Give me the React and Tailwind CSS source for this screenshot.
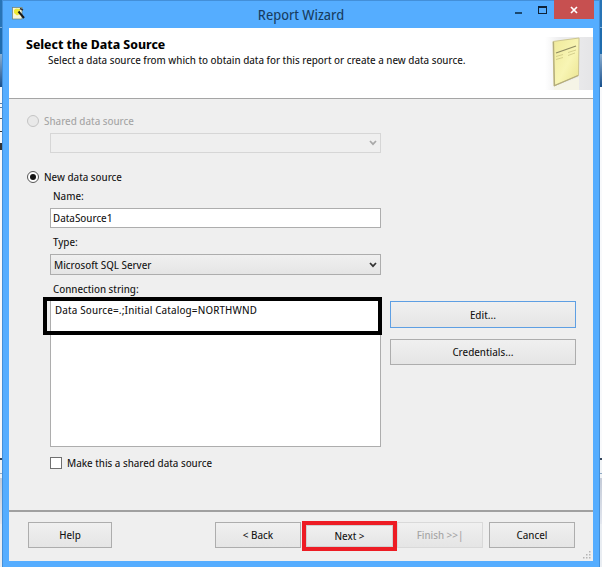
import React, { useState } from 'react';

const Chevron = ({ className }) => (
  <svg className={className} width="8" height="6" viewBox="0 0 8 6" fill="none" stroke="currentColor" strokeWidth="1.7">
    <path d="M1 1 L4 4.2 L7 1" />
  </svg>
);

const WizardIcon = () => (
  <svg width="13" height="13" viewBox="0 0 13 13">
    <rect x="0.5" y="0.5" width="9.5" height="11.5" fill="#f6f6dc" stroke="#77806a" strokeWidth="0.7" />
    <path d="M2 3 L4 1.5 L8 2 L8 7 L5 8.5 L2 6 Z" fill="#eeea35" />
    <path d="M6.5 4.5 L12 11" stroke="#1a1a1a" strokeWidth="2" />
    <path d="M8 1.5 L11 3" stroke="#333" strokeWidth="1.4" />
  </svg>
);

const ReportArt = () => (
  <svg width="48" height="53" viewBox="0 0 48 53">
    <defs>
      <linearGradient id="fade" x1="0" x2="1" y1="0" y2="0">
        <stop offset="0" stopColor="#ffffff" />
        <stop offset="0.3" stopColor="#eeeeef" />
        <stop offset="1" stopColor="#e5e5e7" />
      </linearGradient>
      <linearGradient id="paper" x1="0" x2="1" y1="0" y2="1">
        <stop offset="0" stopColor="#efe99a" />
        <stop offset="0.55" stopColor="#f8f5b4" />
        <stop offset="1" stopColor="#eae38e" />
      </linearGradient>
    </defs>
    <rect width="48" height="53" fill="url(#fade)" />
    <path d="M9 50 L34 40 L34 53 L9 53 Z" fill="#f5f4e6" />
    <path d="M8 4.5 L34 1 L33.5 38.5 L9 49 Z" fill="url(#paper)" stroke="#cdc691" strokeWidth="1" />
    <path d="M8.5 5 L9.5 48.5 L33 38.5" fill="none" stroke="#b3ac7c" strokeWidth="1.2" />
    <path d="M11 16 L31 9" stroke="#8f8b62" strokeWidth="1.3" />
    <path d="M11 19.5 L18 17.5 M23 15.5 L31 13 M11 22.5 L18 20.5 M23 18.5 L30 16" stroke="#cbc583" strokeWidth="0.8" />
  </svg>
);

const Button = ({ className, children, ...props }) => (
  <button
    className={`border bg-linear-to-b from-[#f0f0f0] to-[#e5e5e5] text-center ${className}`}
    {...props}
  >
    {children}
  </button>
);

// slivers of the window behind the dialog
const EdgeStrip = ({ marks }) => (
  <div className="flex w-[2px] shrink-0 flex-col bg-[#e9edf2]">
    <div className="h-[27px] bg-[#2874b6]"></div>
    <div className="h-px bg-[#7fb0dc]"></div>
    <div className="h-[26px] bg-[#1f6cae]"></div>
    <div className="h-[33px] bg-linear-to-b from-[#8bb0d2] to-[#16508c]"></div>
    <div className="flex h-[371px] flex-col bg-[#f8f9fb]">
      {marks && (
        <>
          <div className="mt-[16px] h-px bg-[#5b7fa6]"></div>
          <div className="mt-[3px] h-px bg-[#5b7fa6]"></div>
          <div className="mt-[10px] h-px bg-[#555]"></div>
          <div className="mt-[12px] h-px bg-[#333]"></div>
          <div className="mt-[11px] h-[7px] bg-[#333]"></div>
        </>
      )}
    </div>
    <div className="h-[2px] bg-[#34465c]"></div>
    <div className="h-[13px] bg-[#f0f3f6]"></div>
    <div className="h-px bg-[#8fa9c4]"></div>
    <div className="h-[4px] bg-[#f0f3f6]"></div>
    <div className="h-[46px] bg-linear-to-b from-[#c4cbd8] to-[#e2e6ee]"></div>
  </div>
);

const App = () => {
  const [mode, setMode] = useState('new');
  const [name, setName] = useState('DataSource1');
  const [shared, setShared] = useState(false);

  return (
    <div className="flex h-[567px] w-[602px] overflow-hidden font-['Noto_Sans_Display','Noto_Sans','Open_Sans',sans-serif] text-[11.5px] leading-[16px] text-[#111] [font-stretch:87.5%]">
      <EdgeStrip marks />
      <div className="flex w-[598px] flex-col border-x border-t border-[#438fd9] bg-[#55adff] px-[6px] pb-[6px]">
        <div className="flex h-[27px] shrink-0">
          <div className="w-[130px] pt-[6px] pl-[3px]">
            <WizardIcon />
          </div>
          <h1 className="flex-1 pt-[4px] pl-[24px] text-center text-[15px] leading-[18px] text-[#173c60]">Report Wizard</h1>
          <div className="-mr-px flex w-[155px] justify-end">
            <div className="mt-[11px] mr-[16px] h-[2px] w-[7px] bg-[#1b486f]"></div>
            <div className="mt-[5px] mr-[7px] h-[8px] w-[9px] border border-t-2 border-[#0f2338]"></div>
            <button className="-mt-px flex h-[19px] w-[40px] items-center justify-center bg-[#c75050] pt-px">
              <svg width="8" height="8" viewBox="0 0 8 8" stroke="#fff" strokeWidth="1.7">
                <path d="M1 1 L7 7 M7 1 L1 7" />
              </svg>
            </button>
          </div>
        </div>

        <div className="flex flex-1 flex-col bg-[#efefef]">
          <header className="flex h-[71px] justify-between border-b border-[#a5a5a5] bg-white">
            <div className="pt-[7px] pl-[17px]">
              <h2 className="text-[13px] leading-[18px] font-bold text-black [font-stretch:100%]">Select the Data Source</h2>
              <p className="-mt-px pl-[22px]">Select a data source from which to obtain data for this report or create a new data source.</p>
            </div>
            <div className="pt-[9px]">
              <ReportArt />
            </div>
          </header>

          <main className="flex h-[411px] flex-col pt-[14px] pl-[18px]">
            <label className="flex h-[16px] items-center gap-[5px] text-[#a3a3a3]">
              <span className="h-[12px] w-[12px] rounded-full border border-[#c4c4c4] bg-[#e9e9e9]"></span>
              Shared data source
            </label>
            <div className="mt-[4px] ml-[23px] flex h-[20px] w-[331px] items-center justify-end border border-[#d6d6d6] pr-[3px]">
              <Chevron className="text-[#a8a8a8]" />
            </div>
            <label className="mt-[16px] flex h-[16px] items-center gap-[5px]" onClick={() => setMode('new')}>
              <span className="flex h-[12px] w-[12px] items-center justify-center rounded-full border border-[#555] bg-white">
                {mode === 'new' && <span className="h-[6px] w-[6px] rounded-full bg-[#151515]"></span>}
              </span>
              New data source
            </label>

            <div className="flex flex-col pl-[23px]">
              <label className="mt-[3px] pl-[3px]">Name:</label>
              <input
                className="mt-[4px] h-[20px] w-[331px] border border-[#adadad] bg-white px-[2px] pb-px outline-none [font-stretch:87.5%]"
                value={name}
                onChange={(e) => setName(e.target.value)}
              />
              <label className="mt-[6px] pl-[3px]">Type:</label>
              <div className="mt-[4px] flex h-[21px] w-[331px] items-center justify-between border border-[#adadad] bg-linear-to-b from-[#f0f0f0] to-[#e5e5e5] pr-[3px] pl-[3px]">
                <span>Microsoft SQL Server</span>
                <Chevron className="text-[#333]" />
              </div>
              <label className="mt-[6px] pl-[3px]">Connection string:</label>
              <div className="flex">
                <div className="relative mt-[3px] h-[147px] w-[331px] border border-[#adadad] bg-white pt-px pl-[4px] tracking-[0.15px]">
                  Data Source=.;Initial Catalog=NORTHWND
                  <div className="absolute -top-[4px] -left-[8px] h-[38px] w-[339px] border-4 border-black"></div>
                </div>
                <div className="mt-[4px] ml-[9px] flex flex-col gap-[11px]">
                  <Button className="h-[27px] w-[186px] border-[#5e9fe3]">Edit...</Button>
                  <Button className="h-[26px] w-[186px] border-[#adadad]">Credentials...</Button>
                </div>
              </div>
              <label className="mt-[8px] flex h-[16px] items-center gap-[5px]">
                <button className="h-[12px] w-[12px] border border-[#707070] bg-white text-[9px] leading-[9px]" onClick={() => setShared(!shared)}>
                  {shared && '✓'}
                </button>
                Make this a shared data source
              </label>
            </div>
          </main>

          <footer className="relative flex flex-1 border-t-2 border-[#a0a0a0] pt-[10px] pl-[19px]">
            <Button className="h-[26px] w-[84px] border-[#adadad]">Help</Button>
            <Button className="ml-[103px] h-[26px] w-[86px] border-[#adadad]">&lt; Back</Button>
            <div className="-mt-px ml-[1px] h-[30px] w-[95px] border-4 border-[#ed1c24]">
              <Button className="h-full w-full border-[#d0d0d0] pb-px">Next &gt;</Button>
            </div>
            <Button className="h-[26px] w-[86px] border-[#d9d9d9] text-[#a3a3a3]" disabled>Finish &gt;&gt;|</Button>
            <Button className="ml-[6px] h-[26px] w-[86px] border-[#adadad]">Cancel</Button>
            <svg className="absolute right-[2px] bottom-[2px]" width="8" height="8" fill="#b5b5b5">
              <path d="M6 0h1.5v1.5h-1.5z M3 3h1.5v1.5h-1.5z M6 3h1.5v1.5h-1.5z M0 6h1.5v1.5h-1.5z M3 6h1.5v1.5h-1.5z M6 6h1.5v1.5h-1.5z" />
            </svg>
          </footer>
        </div>
      </div>
      <EdgeStrip />
    </div>
  );
};

export default App;
